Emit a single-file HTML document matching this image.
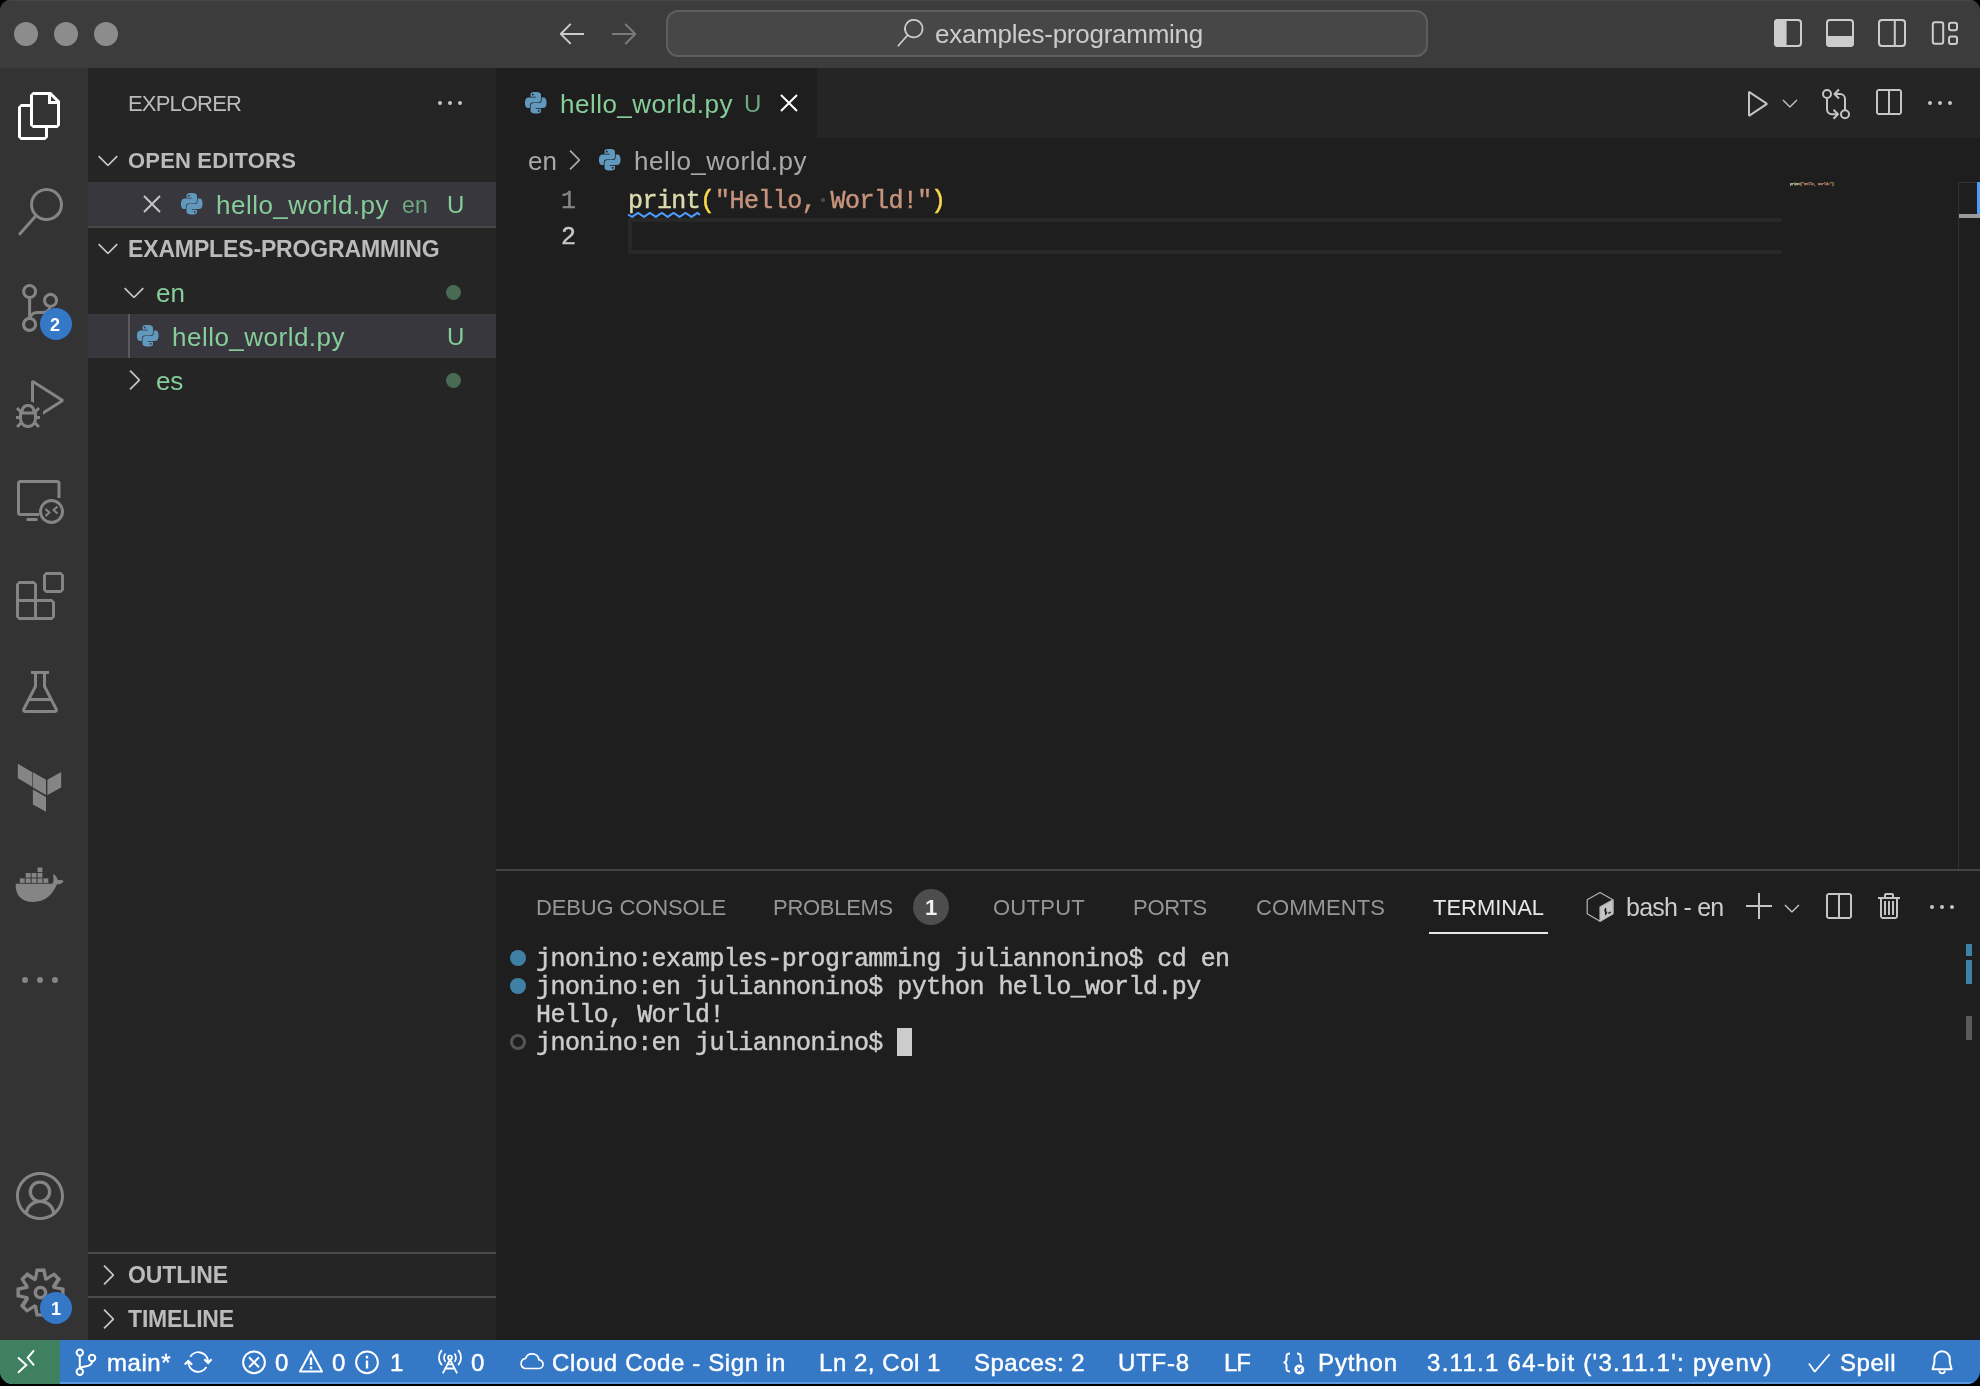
<!DOCTYPE html>
<html><head><meta charset="utf-8"><title>examples-programming</title>
<style>
*{box-sizing:border-box;margin:0;padding:0}
html,body{width:1980px;height:1386px;overflow:hidden;background:#000}
body{font-family:"Liberation Sans",sans-serif}
#win{position:absolute;left:0;top:0;width:1980px;height:1384px;overflow:hidden;border-radius:10px 10px 13px 13px;background:#1e1e1e}
.a{position:absolute}
.t{position:absolute;white-space:pre;line-height:1;will-change:transform}
svg{position:absolute;overflow:visible}
.m{-webkit-text-stroke:0.45px currentColor}

</style></head>
<body>
<div id="win">
<!-- title bar -->
<div class="a" style="left:0;top:0;width:1980px;height:68px;background:#3c3c3c;border-top:1px solid #464646"></div>
<div class="a" style="left:666px;top:9.5px;width:762px;height:47px;background:#474747;border:2px solid #5e5e5e;border-radius:12px"></div>
<div class="a" style="left:14px;top:22px;width:24px;height:24px;border-radius:50%;background:#8c8c8c"></div>
<div class="a" style="left:54px;top:22px;width:24px;height:24px;border-radius:50%;background:#8c8c8c"></div>
<div class="a" style="left:94px;top:22px;width:24px;height:24px;border-radius:50%;background:#8c8c8c"></div>
<!-- activity bar -->
<div class="a" style="left:0;top:68px;width:88px;height:1272px;background:#333333"></div>
<!-- sidebar -->
<div class="a" style="left:88px;top:68px;width:408px;height:1272px;background:#252526"></div>
<div class="a" style="left:88px;top:182px;width:408px;height:44px;background:#37373d"></div>
<div class="a" style="left:88px;top:226px;width:408px;height:2px;background:#474747"></div>
<div class="a" style="left:88px;top:314px;width:408px;height:44px;background:#37373d"></div>
<div class="a" style="left:128px;top:314px;width:2px;height:44px;background:#5a5a5a"></div>
<div class="a" style="left:88px;top:1252px;width:408px;height:2px;background:#4a4a4a"></div>
<div class="a" style="left:88px;top:1296px;width:408px;height:2px;background:#4a4a4a"></div>
<div class="a" style="left:446px;top:285px;width:15px;height:15px;border-radius:50%;background:#4a6b53"></div>
<div class="a" style="left:446px;top:373px;width:15px;height:15px;border-radius:50%;background:#4a6b53"></div>
<!-- editor tabs -->
<div class="a" style="left:496px;top:68px;width:1484px;height:70px;background:#252526"></div>
<div class="a" style="left:496px;top:68px;width:321px;height:70px;background:#1e1e1e"></div>
<!-- current line -->
<div class="a" style="left:628px;top:218px;width:1154px;height:36px;border:4px solid #282828;border-right:0"></div>
<!-- minimap / scrollbar -->
<div class="a" style="left:1958px;top:182px;width:1px;height:688px;background:#333333"></div>
<div class="a" style="left:1958px;top:182px;width:22px;height:1px;background:#333333"></div>
<div class="a" style="left:1977px;top:182px;width:3px;height:34px;background:#4d9bfc"></div>
<div class="a" style="left:1959px;top:214px;width:21px;height:4px;background:#9a9a9a"></div>
<div class="a" style="left:821.2px;top:198px;width:3.6px;height:3.6px;border-radius:50%;background:#4c4c4c"></div>
<!-- panel -->
<div class="a" style="left:496px;top:869px;width:1484px;height:2px;background:#444444"></div>
<div class="a" style="left:1429px;top:932px;width:119px;height:2px;background:#e7e7e7"></div>
<div class="a" style="left:913px;top:889px;width:36px;height:36px;border-radius:50%;background:#4d4d4d"></div>
<div class="a" style="left:897px;top:1028px;width:15px;height:28px;background:#cccccc"></div>
<div class="a" style="left:510px;top:950px;width:16px;height:16px;border-radius:50%;background:#3f81a6"></div>
<div class="a" style="left:510px;top:978px;width:16px;height:16px;border-radius:50%;background:#3f81a6"></div>
<div class="a" style="left:510px;top:1034px;width:16px;height:16px;border-radius:50%;border:3px solid #555"></div>
<div class="a" style="left:1966px;top:944px;width:6px;height:12px;background:#3f81a6"></div>
<div class="a" style="left:1966px;top:960px;width:6px;height:24px;background:#3f81a6"></div>
<div class="a" style="left:1966px;top:1016px;width:6px;height:24px;background:#5a5a5a"></div>
<!-- status bar -->
<div class="a" style="left:0;top:1340px;width:1980px;height:44px;background:#3478c6;border-bottom:2px solid #5e98da"></div>
<div class="a" style="left:0;top:1340px;width:60px;height:44px;background:#3f8060"></div>

<svg style="left:16px;top:92px" width="48" height="48" viewBox="0 0 24 24"><path fill="#ffffff" fill-rule="evenodd" d="M17.5 0h-9L7 1.5V6H2.5L1 7.5v15.07L2.5 24h12.07L16 22.57V18h4.7l1.3-1.43V4.5L17.5 0zm0 2.12l2.38 2.38H17.5V2.12zm-3 20.38h-12v-15H7v9.07L8.5 18h6v4.5zm6-6h-12v-15H16V6h4.5v10.5z"/></svg>
<svg style="left:16px;top:188px" width="48" height="48" viewBox="0 0 24 24"><path fill="#858585" fill-rule="evenodd" d="M15.25 0a8.25 8.25 0 0 0-6.18 13.72L1 22.88l1.12 1 8.05-9.12A8.251 8.251 0 1 0 15.25.01V0zm0 15a6.75 6.75 0 1 1 0-13.5 6.75 6.75 0 0 1 0 13.5z"/></svg>
<svg style="left:16px;top:284px" width="48" height="48" viewBox="0 0 24 24"><path fill="#858585" fill-rule="evenodd" d="M21.007 8.222A3.738 3.738 0 0 0 15.045 5.2a3.737 3.737 0 0 0 1.156 6.583 2.988 2.988 0 0 1-2.668 1.67h-2.99a4.456 4.456 0 0 0-2.989 1.165V7.4a3.737 3.737 0 1 0-1.494 0v9.117a3.776 3.776 0 1 0 1.816.099 2.99 2.99 0 0 1 2.668-1.667h2.99a4.484 4.484 0 0 0 4.223-3.039 3.736 3.736 0 0 0 3.25-3.687zM4.565 3.738a2.242 2.242 0 1 1 4.484 0 2.242 2.242 0 0 1-4.484 0zm4.484 16.441a2.242 2.242 0 1 1-4.484 0 2.242 2.242 0 0 1 4.484 0zm8.221-9.715a2.242 2.242 0 1 1 0-4.485 2.242 2.242 0 0 1 0 4.485z"/></svg>
<svg style="left:16px;top:380px" width="48" height="48" viewBox="0 0 24 24"><path fill="#858585" fill-rule="evenodd" d="M10.94 13.5l-1.32 1.32a3.73 3.73 0 0 0-7.24 0L1.06 13.5 0 14.56l1.72 1.72-.22.22V18H0v1.5h1.5v.08c.077.489.214.966.41 1.42L0 22.94 1.06 24l1.65-1.65A4.308 4.308 0 0 0 6 24a4.31 4.31 0 0 0 3.29-1.65L10.94 24 12 22.94 10.09 21c.198-.464.336-.951.41-1.45v-.1H12V18h-1.5v-1.5l-.22-.22L12 14.56l-1.06-1.06zM6 13.5a2.25 2.25 0 0 1 2.25 2.25h-4.5A2.25 2.25 0 0 1 6 13.5zm3 6a3.33 3.33 0 0 1-3 3 3.33 3.33 0 0 1-3-3v-2.25h6v2.25zm14.76-9.9v1.26L13.5 17.37V15.6l8.5-5.37L9 2v9.46a5.07 5.07 0 0 0-1.5-.72V.63L8.64 0l15.12 9.6z"/></svg>
<svg style="left:16px;top:572px" width="48" height="48" viewBox="0 0 24 24"><path fill="#858585" fill-rule="evenodd" d="M13.5 1.5L15 0h7.5L24 1.5V9l-1.5 1.5H15L13.5 9V1.5zm1.5 0V9h7.5V1.5H15zM0 15V6l1.5-1.5H9L10.5 6v7.5H18l1.5 1.5v7.5L18 24H1.5L0 22.5V15zm9-1.5V6H1.5v7.5H9zM9 15H1.5v7.5H9V15zm1.5 7.5H18V15h-7.5v7.5z"/></svg>
<svg style="left:16px;top:668px" width="48" height="48" viewBox="0 0 16 16"><path fill="#858585" fill-rule="evenodd" d="M13.893 13.558L10 6.006v-4h1v-1H9.994V1H6v.006H5v1h1v4.01l-3.894 7.542A1 1 0 0 0 3 15h10a1 1 0 0 0 .893-1.442zM7 6.25V2h2v4.25l1.933 3.75H5.066L7 6.25zM3 14l1.55-3h6.9l1.55 3H3z"/></svg>
<svg style="left:16px;top:1172px" width="48" height="48" viewBox="0 0 16 16"><path fill="#858585" fill-rule="evenodd" d="M16 7.992C16 3.58 12.416 0 8 0S0 3.58 0 7.992c0 2.43 1.104 4.62 2.832 6.09.016.016.032.016.032.032.144.112.288.224.448.336.08.048.144.111.224.175A7.98 7.98 0 0 0 8.016 16a7.98 7.98 0 0 0 4.48-1.375c.08-.048.144-.111.224-.16.144-.111.304-.223.448-.335.016-.016.032-.016.032-.032 1.696-1.487 2.8-3.676 2.8-6.106zm-8 7.001c-1.504 0-2.88-.48-4.016-1.279.016-.128.048-.255.08-.383a4.17 4.17 0 0 1 .416-.991c.176-.304.384-.576.64-.816.24-.24.528-.463.816-.639.304-.176.624-.304.976-.4A4.15 4.15 0 0 1 8 10.342a4.185 4.185 0 0 1 2.928 1.166c.368.368.656.8.864 1.295.112.288.192.592.24.911A7.03 7.03 0 0 1 8 14.993zm-2.448-7.4a2.49 2.49 0 0 1-.208-1.024c0-.351.064-.703.208-1.023.144-.32.336-.607.576-.847.24-.24.528-.431.848-.575.32-.144.672-.208 1.024-.208.368 0 .704.064 1.024.208.32.144.608.336.848.575.24.24.432.528.576.847.144.32.208.672.208 1.023 0 .368-.064.704-.208 1.023a2.84 2.84 0 0 1-.576.848 2.84 2.84 0 0 1-.848.575 2.715 2.715 0 0 1-2.064 0 2.84 2.84 0 0 1-.848-.575 2.526 2.526 0 0 1-.56-.848zm7.424 5.306c0-.032-.016-.048-.016-.08a5.22 5.22 0 0 0-.688-1.406 4.883 4.883 0 0 0-1.088-1.135 5.207 5.207 0 0 0-1.04-.608 2.82 2.82 0 0 0 .464-.383 4.2 4.2 0 0 0 .624-.784 3.624 3.624 0 0 0 .528-1.934 3.71 3.71 0 0 0-.288-1.47 3.799 3.799 0 0 0-.816-1.199 3.845 3.845 0 0 0-1.2-.8 3.72 3.72 0 0 0-1.472-.287 3.72 3.72 0 0 0-1.472.288 3.631 3.631 0 0 0-1.2.815 3.84 3.84 0 0 0-.8 1.199 3.71 3.71 0 0 0-.288 1.47c0 .352.048.688.144 1.007.096.336.224.64.4.927.16.288.384.544.624.784.144.144.304.271.48.383a5.12 5.12 0 0 0-1.04.624c-.416.32-.784.703-1.088 1.119a4.999 4.999 0 0 0-.688 1.406c-.016.032-.016.064-.016.08C1.776 11.636.992 9.91.992 7.992.992 4.14 4.144.991 8 .991s7.008 3.149 7.008 7.001a6.96 6.96 0 0 1-2.032 4.907z"/></svg>
<svg style="left:12.5px;top:1264.5px" width="55" height="55" viewBox="0 0 16 16"><path fill="#858585" fill-rule="evenodd" d="M9.1 4.4L8.6 2H7.4l-.5 2.4-.7.3-2-1.3-.9.8 1.3 2-.2.7-2.4.5v1.2l2.4.5.3.8-1.3 2 .8.8 2-1.3.8.3.4 2.3h1.2l.5-2.4.8-.3 2 1.3.8-.8-1.3-2 .3-.8 2.3-.4V7.4l-2.4-.5-.3-.8 1.3-2-.8-.8-2 1.3-.7-.2zM9.4 1l.5 2.4L12 2.1l2 2-1.4 2.1 2.4.4v2.8l-2.4.5L14 12l-2 2-2.1-1.4-.5 2.4H6.6l-.5-2.4L4 13.9l-2-2 1.4-2.1L1 9.4V6.6l2.4-.5L2.1 4l2-2 2.1 1.4.4-2.4h2.8zm.6 7c0 1.1-.9 2-2 2s-2-.9-2-2 .9-2 2-2 2 .9 2 2zM8 9c.6 0 1-.4 1-1s-.4-1-1-1-1 .4-1 1 .4 1 1 1z"/></svg>
<svg style="left:16px;top:956px" width="48" height="48" viewBox="0 0 16 16"><path fill="#858585" fill-rule="evenodd" d="M4 8a1 1 0 1 1-2 0 1 1 0 0 1 2 0zm5 0a1 1 0 1 1-2 0 1 1 0 0 1 2 0zm5 0a1 1 0 1 1-2 0 1 1 0 0 1 2 0z"/></svg>
<svg style="left:434px;top:87px" width="32" height="32" viewBox="0 0 16 16"><path fill="#c5c5c5" fill-rule="evenodd" d="M4 8a1 1 0 1 1-2 0 1 1 0 0 1 2 0zm5 0a1 1 0 1 1-2 0 1 1 0 0 1 2 0zm5 0a1 1 0 1 1-2 0 1 1 0 0 1 2 0z"/></svg>
<svg style="left:92px;top:144px" width="32" height="32" viewBox="0 0 16 16"><path fill="#c5c5c5" fill-rule="evenodd" d="M7.976 10.072l4.357-4.357.62.618L8.284 11h-.618L3 6.333l.619-.618 4.357 4.357z"/></svg>
<svg style="left:92px;top:232px" width="32" height="32" viewBox="0 0 16 16"><path fill="#c5c5c5" fill-rule="evenodd" d="M7.976 10.072l4.357-4.357.62.618L8.284 11h-.618L3 6.333l.619-.618 4.357 4.357z"/></svg>
<svg style="left:118px;top:276px" width="32" height="32" viewBox="0 0 16 16"><path fill="#c5c5c5" fill-rule="evenodd" d="M7.976 10.072l4.357-4.357.62.618L8.284 11h-.618L3 6.333l.619-.618 4.357 4.357z"/></svg>
<svg style="left:118px;top:364px" width="32" height="32" viewBox="0 0 16 16"><path fill="#c5c5c5" fill-rule="evenodd" d="M10.072 8.024L5.715 3.667l.618-.62L11 7.716v.618L6.333 13l-.618-.619 4.357-4.357z"/></svg>
<svg style="left:92px;top:1259px" width="32" height="32" viewBox="0 0 16 16"><path fill="#c5c5c5" fill-rule="evenodd" d="M10.072 8.024L5.715 3.667l.618-.62L11 7.716v.618L6.333 13l-.618-.619 4.357-4.357z"/></svg>
<svg style="left:92px;top:1303px" width="32" height="32" viewBox="0 0 16 16"><path fill="#c5c5c5" fill-rule="evenodd" d="M10.072 8.024L5.715 3.667l.618-.62L11 7.716v.618L6.333 13l-.618-.619 4.357-4.357z"/></svg>
<svg style="left:136px;top:188px" width="32" height="32" viewBox="0 0 16 16"><path fill="#c5c5c5" fill-rule="evenodd" d="M8 8.707l3.646 3.647.708-.707L8.707 8l3.647-3.646-.707-.708L8 7.293 4.354 3.646l-.707.708L7.293 8l-3.646 3.646.707.708L8 8.707z"/></svg>
<svg style="left:773px;top:87px" width="32" height="32" viewBox="0 0 16 16"><path fill="#ffffff" fill-rule="evenodd" d="M8 8.707l3.646 3.647.708-.707L8.707 8l3.647-3.646-.707-.708L8 7.293 4.354 3.646l-.707.708L7.293 8l-3.646 3.646.707.708L8 8.707z"/></svg>
<svg style="left:558px;top:144px" width="32" height="32" viewBox="0 0 16 16"><path fill="#a9a9a9" fill-rule="evenodd" d="M10.072 8.024L5.715 3.667l.618-.62L11 7.716v.618L6.333 13l-.618-.619 4.357-4.357z"/></svg>
<svg style="left:556px;top:17px" width="32" height="32" viewBox="0 0 16 16"><path fill="#cccccc" fill-rule="evenodd" d="M7 3.093l-5 5V8.8l5 5 .707-.707-4.146-4.147H14v-1H3.56L7.708 3.8 7 3.093z"/></svg>
<svg style="left:608px;top:17px" width="32" height="32" viewBox="0 0 16 16"><path fill="#7a7a7a" fill-rule="evenodd" d="M9 13.887l5-5V8.18l-5-5-.707.707 4.146 4.147H2v1h10.44L8.292 13.18l.707.707z"/></svg>
<svg style="left:1742px;top:87px" width="32" height="32" viewBox="0 0 16 16"><path fill="#c5c5c5" fill-rule="evenodd" d="M3.78 2L3 2.41v12l.78.42 9-6V8l-9-6zM4 13.48V3.35l7.6 5.07L4 13.48z"/></svg>
<svg style="left:1778px;top:91px" width="24" height="24" viewBox="0 0 16 16"><path fill="#c5c5c5" fill-rule="evenodd" d="M7.976 10.072l4.357-4.357.62.618L8.284 11h-.618L3 6.333l.619-.618 4.357 4.357z"/></svg>
<svg style="left:1872px;top:87px" width="32" height="32" viewBox="0 0 16 16"><path fill="#c5c5c5" fill-rule="evenodd" d="M14 1H3L2 2v11l1 1h11l1-1V2l-1-1zM8 13H3V2h5v11zm6 0H9V2h5v11z"/></svg>
<svg style="left:1924px;top:87px" width="32" height="32" viewBox="0 0 16 16"><path fill="#c5c5c5" fill-rule="evenodd" d="M4 8a1 1 0 1 1-2 0 1 1 0 0 1 2 0zm5 0a1 1 0 1 1-2 0 1 1 0 0 1 2 0zm5 0a1 1 0 1 1-2 0 1 1 0 0 1 2 0z"/></svg>
<svg style="left:1744px;top:891px" width="32" height="32" viewBox="0 0 16 16"><path fill="#c5c5c5" fill-rule="evenodd" d="M14 7v1H8v6H7V8H1V7h6V1h1v6h6z"/></svg>
<svg style="left:1780px;top:895.5px" width="24" height="24" viewBox="0 0 16 16"><path fill="#c5c5c5" fill-rule="evenodd" d="M7.976 10.072l4.357-4.357.62.618L8.284 11h-.618L3 6.333l.619-.618 4.357 4.357z"/></svg>
<svg style="left:1821.7px;top:891.2px" width="32" height="32" viewBox="0 0 16 16"><path fill="#c5c5c5" fill-rule="evenodd" d="M14 1H3L2 2v11l1 1h11l1-1V2l-1-1zM8 13H3V2h5v11zm6 0H9V2h5v11z"/></svg>
<svg style="left:1874px;top:891.2px" width="32" height="32" viewBox="0 0 16 16"><path fill="#c5c5c5" fill-rule="evenodd" d="M10 3h3v1h-1v9l-1 1H4l-1-1V4H2V3h3V2a1 1 0 0 1 1-1h3a1 1 0 0 1 1 1v1zM9 2H6v1h3V2zM4 13h7V4H4v9zm2-8H5v7h1V5zm1 0h1v7H7V5zm2 0h1v7H9V5z"/></svg>
<svg style="left:1926px;top:891.3px" width="32" height="32" viewBox="0 0 16 16"><path fill="#c5c5c5" fill-rule="evenodd" d="M4 8a1 1 0 1 1-2 0 1 1 0 0 1 2 0zm5 0a1 1 0 1 1-2 0 1 1 0 0 1 2 0zm5 0a1 1 0 1 1-2 0 1 1 0 0 1 2 0z"/></svg>
<svg style="left:1805.2px;top:1348.8px" width="28" height="28" viewBox="0 0 16 16"><path fill="#ffffff" fill-rule="evenodd" d="M14.431 3.323l-8.47 10-.79-.036-3.35-4.77.818-.574 2.978 4.24 8.051-9.506.764.646z"/></svg>
<svg style="left:524.8px;top:91.8px" width="21.5" height="21.5" viewBox="0 0 24 24"><path fill="#6099bd" fill-rule="evenodd" d="M14.25.18l.9.2.73.26.59.3.45.32.34.34.25.34.16.33.1.3.04.26.02.2-.01.13V8.5l-.05.63-.13.55-.21.46-.26.38-.3.31-.33.25-.35.19-.35.14-.33.1-.3.07-.26.04-.21.02H8.77l-.69.05-.59.14-.5.22-.41.27-.33.32-.27.35-.2.36-.15.37-.1.35-.07.32-.04.27-.02.21v3.06H3.17l-.21-.03-.28-.07-.32-.12-.35-.18-.36-.26-.36-.36-.35-.46-.32-.59-.28-.73-.21-.88-.14-1.05-.05-1.23.06-1.22.16-1.04.24-.87.32-.71.36-.57.4-.44.42-.33.42-.24.4-.16.36-.1.32-.05.24-.01h.16l.06.01h8.16v-.83H6.18l-.01-2.75-.02-.37.05-.34.11-.31.17-.28.25-.26.31-.23.38-.2.44-.18.51-.15.58-.12.64-.1.71-.06.77-.04.84-.02 1.27.05zm-6.3 1.98l-.23.33-.08.41.08.41.23.34.33.22.41.09.41-.09.33-.22.23-.34.08-.41-.08-.41-.23-.33-.33-.22-.41-.09-.41.09zm13.09 3.95l.28.06.32.12.35.18.36.27.36.35.35.47.32.59.28.73.21.88.14 1.04.05 1.23-.06 1.23-.16 1.04-.24.86-.32.71-.36.57-.4.45-.42.33-.42.24-.4.16-.36.09-.32.05-.24.02-.16-.01h-8.22v.82h5.84l.01 2.76.02.36-.05.34-.11.31-.17.29-.25.25-.31.24-.38.2-.44.17-.51.15-.58.13-.64.09-.71.07-.77.04-.84.01-1.27-.04-1.07-.14-.9-.2-.73-.25-.59-.3-.45-.33-.34-.34-.25-.34-.16-.33-.1-.3-.04-.25-.02-.2.01-.13v-5.34l.05-.64.13-.54.21-.46.26-.38.3-.32.33-.24.35-.2.35-.14.33-.1.3-.06.26-.04.21-.02.13-.01h5.84l.69-.05.59-.14.5-.21.41-.28.33-.32.27-.35.2-.36.15-.36.1-.35.07-.32.04-.28.02-.21V6.07h2.09l.14.01zm-6.47 14.25l-.23.33-.08.41.08.41.23.33.33.23.41.08.41-.08.33-.23.23-.33.08-.41-.08-.41-.23-.33-.33-.23-.41-.08-.41.08z"/></svg>
<svg style="left:180.8px;top:193.1px" width="21.5" height="21.5" viewBox="0 0 24 24"><path fill="#6099bd" fill-rule="evenodd" d="M14.25.18l.9.2.73.26.59.3.45.32.34.34.25.34.16.33.1.3.04.26.02.2-.01.13V8.5l-.05.63-.13.55-.21.46-.26.38-.3.31-.33.25-.35.19-.35.14-.33.1-.3.07-.26.04-.21.02H8.77l-.69.05-.59.14-.5.22-.41.27-.33.32-.27.35-.2.36-.15.37-.1.35-.07.32-.04.27-.02.21v3.06H3.17l-.21-.03-.28-.07-.32-.12-.35-.18-.36-.26-.36-.36-.35-.46-.32-.59-.28-.73-.21-.88-.14-1.05-.05-1.23.06-1.22.16-1.04.24-.87.32-.71.36-.57.4-.44.42-.33.42-.24.4-.16.36-.1.32-.05.24-.01h.16l.06.01h8.16v-.83H6.18l-.01-2.75-.02-.37.05-.34.11-.31.17-.28.25-.26.31-.23.38-.2.44-.18.51-.15.58-.12.64-.1.71-.06.77-.04.84-.02 1.27.05zm-6.3 1.98l-.23.33-.08.41.08.41.23.34.33.22.41.09.41-.09.33-.22.23-.34.08-.41-.08-.41-.23-.33-.33-.22-.41-.09-.41.09zm13.09 3.95l.28.06.32.12.35.18.36.27.36.35.35.47.32.59.28.73.21.88.14 1.04.05 1.23-.06 1.23-.16 1.04-.24.86-.32.71-.36.57-.4.45-.42.33-.42.24-.4.16-.36.09-.32.05-.24.02-.16-.01h-8.22v.82h5.84l.01 2.76.02.36-.05.34-.11.31-.17.29-.25.25-.31.24-.38.2-.44.17-.51.15-.58.13-.64.09-.71.07-.77.04-.84.01-1.27-.04-1.07-.14-.9-.2-.73-.25-.59-.3-.45-.33-.34-.34-.25-.34-.16-.33-.1-.3-.04-.25-.02-.2.01-.13v-5.34l.05-.64.13-.54.21-.46.26-.38.3-.32.33-.24.35-.2.35-.14.33-.1.3-.06.26-.04.21-.02.13-.01h5.84l.69-.05.59-.14.5-.21.41-.28.33-.32.27-.35.2-.36.15-.36.1-.35.07-.32.04-.28.02-.21V6.07h2.09l.14.01zm-6.47 14.25l-.23.33-.08.41.08.41.23.33.33.23.41.08.41-.08.33-.23.23-.33.08-.41-.08-.41-.23-.33-.33-.23-.41-.08-.41.08z"/></svg>
<svg style="left:136.9px;top:325.1px" width="21.5" height="21.5" viewBox="0 0 24 24"><path fill="#6099bd" fill-rule="evenodd" d="M14.25.18l.9.2.73.26.59.3.45.32.34.34.25.34.16.33.1.3.04.26.02.2-.01.13V8.5l-.05.63-.13.55-.21.46-.26.38-.3.31-.33.25-.35.19-.35.14-.33.1-.3.07-.26.04-.21.02H8.77l-.69.05-.59.14-.5.22-.41.27-.33.32-.27.35-.2.36-.15.37-.1.35-.07.32-.04.27-.02.21v3.06H3.17l-.21-.03-.28-.07-.32-.12-.35-.18-.36-.26-.36-.36-.35-.46-.32-.59-.28-.73-.21-.88-.14-1.05-.05-1.23.06-1.22.16-1.04.24-.87.32-.71.36-.57.4-.44.42-.33.42-.24.4-.16.36-.1.32-.05.24-.01h.16l.06.01h8.16v-.83H6.18l-.01-2.75-.02-.37.05-.34.11-.31.17-.28.25-.26.31-.23.38-.2.44-.18.51-.15.58-.12.64-.1.71-.06.77-.04.84-.02 1.27.05zm-6.3 1.98l-.23.33-.08.41.08.41.23.34.33.22.41.09.41-.09.33-.22.23-.34.08-.41-.08-.41-.23-.33-.33-.22-.41-.09-.41.09zm13.09 3.95l.28.06.32.12.35.18.36.27.36.35.35.47.32.59.28.73.21.88.14 1.04.05 1.23-.06 1.23-.16 1.04-.24.86-.32.71-.36.57-.4.45-.42.33-.42.24-.4.16-.36.09-.32.05-.24.02-.16-.01h-8.22v.82h5.84l.01 2.76.02.36-.05.34-.11.31-.17.29-.25.25-.31.24-.38.2-.44.17-.51.15-.58.13-.64.09-.71.07-.77.04-.84.01-1.27-.04-1.07-.14-.9-.2-.73-.25-.59-.3-.45-.33-.34-.34-.25-.34-.16-.33-.1-.3-.04-.25-.02-.2.01-.13v-5.34l.05-.64.13-.54.21-.46.26-.38.3-.32.33-.24.35-.2.35-.14.33-.1.3-.06.26-.04.21-.02.13-.01h5.84l.69-.05.59-.14.5-.21.41-.28.33-.32.27-.35.2-.36.15-.36.1-.35.07-.32.04-.28.02-.21V6.07h2.09l.14.01zm-6.47 14.25l-.23.33-.08.41.08.41.23.33.33.23.41.08.41-.08.33-.23.23-.33.08-.41-.08-.41-.23-.33-.33-.23-.41-.08-.41.08z"/></svg>
<svg style="left:598.8px;top:149.1px" width="21.5" height="21.5" viewBox="0 0 24 24"><path fill="#6099bd" fill-rule="evenodd" d="M14.25.18l.9.2.73.26.59.3.45.32.34.34.25.34.16.33.1.3.04.26.02.2-.01.13V8.5l-.05.63-.13.55-.21.46-.26.38-.3.31-.33.25-.35.19-.35.14-.33.1-.3.07-.26.04-.21.02H8.77l-.69.05-.59.14-.5.22-.41.27-.33.32-.27.35-.2.36-.15.37-.1.35-.07.32-.04.27-.02.21v3.06H3.17l-.21-.03-.28-.07-.32-.12-.35-.18-.36-.26-.36-.36-.35-.46-.32-.59-.28-.73-.21-.88-.14-1.05-.05-1.23.06-1.22.16-1.04.24-.87.32-.71.36-.57.4-.44.42-.33.42-.24.4-.16.36-.1.32-.05.24-.01h.16l.06.01h8.16v-.83H6.18l-.01-2.75-.02-.37.05-.34.11-.31.17-.28.25-.26.31-.23.38-.2.44-.18.51-.15.58-.12.64-.1.71-.06.77-.04.84-.02 1.27.05zm-6.3 1.98l-.23.33-.08.41.08.41.23.34.33.22.41.09.41-.09.33-.22.23-.34.08-.41-.08-.41-.23-.33-.33-.22-.41-.09-.41.09zm13.09 3.95l.28.06.32.12.35.18.36.27.36.35.35.47.32.59.28.73.21.88.14 1.04.05 1.23-.06 1.23-.16 1.04-.24.86-.32.71-.36.57-.4.45-.42.33-.42.24-.4.16-.36.09-.32.05-.24.02-.16-.01h-8.22v.82h5.84l.01 2.76.02.36-.05.34-.11.31-.17.29-.25.25-.31.24-.38.2-.44.17-.51.15-.58.13-.64.09-.71.07-.77.04-.84.01-1.27-.04-1.07-.14-.9-.2-.73-.25-.59-.3-.45-.33-.34-.34-.25-.34-.16-.33-.1-.3-.04-.25-.02-.2.01-.13v-5.34l.05-.64.13-.54.21-.46.26-.38.3-.32.33-.24.35-.2.35-.14.33-.1.3-.06.26-.04.21-.02.13-.01h5.84l.69-.05.59-.14.5-.21.41-.28.33-.32.27-.35.2-.36.15-.36.1-.35.07-.32.04-.28.02-.21V6.07h2.09l.14.01zm-6.47 14.25l-.23.33-.08.41.08.41.23.33.33.23.41.08.41-.08.33-.23.23-.33.08-.41-.08-.41-.23-.33-.33-.23-.41-.08-.41.08z"/></svg>
<svg style="left:0px;top:470px" width="88" height="60" viewBox="0 0 88 60"><g fill="none" stroke="#858585" stroke-width="3" stroke-linejoin="round">
<path d="M39 44.5H20.5a2 2 0 0 1-2-2v-29a2 2 0 0 1 2-2h36.5a2 2 0 0 1 2 2V28"/>
<path d="M26.5 49.5h11"/>
<circle cx="51.5" cy="41.5" r="11"/>
<path d="M45.5 39l4 3.5-4 3.5M57.5 36.5l-4 3.5 4 3.5" stroke-width="2.2"/></g></svg>
<svg style="left:0px;top:750px" width="88" height="70" viewBox="0 0 88 70"><g fill="#858585"><path d="M17.8 13.8l14.5 8.5v14.5l-14.5-8.5z"/><path d="M32.9 22.3l13.1 7.5v15.1l-13.1-7.5z"/><path d="M47.4 29.8l13.8-7.9v15.5l-13.8 7.5z"/><path d="M32.9 39.4l13.1 7.7v14.7l-13.1-7.2z"/></g></svg>
<svg style="left:0px;top:860px" width="88" height="50" viewBox="0 0 88 50"><g fill="#858585">
<path d="M15.7 23.7h36.6c1-1.2 1.3-3 1.2-4.6 -.1-1.800 -.5-3.300 -.2-5.2 2.600 1.500 4.200 4.100 4.500 6.400 2.300-.6 4.300-.3 6 .6 -1.300 2.300-3.600 3.300-6.800 3.400 -3.800 9-10.500 17.700-24.300 17.700 -10.800 0-17.600-6.500-17-18.300z"/>
<rect x="19.8" y="18.400" width="4.900" height="4.500"/><rect x="25.700" y="18.400" width="4.900" height="4.500"/><rect x="31.600" y="18.400" width="4.900" height="4.500"/><rect x="37.500" y="18.400" width="4.900" height="4.500"/><rect x="43.400" y="18.400" width="4.900" height="4.500"/>
<rect x="25.700" y="13" width="4.900" height="4.500"/><rect x="31.600" y="13" width="4.900" height="4.500"/><rect x="37.500" y="13" width="4.900" height="4.500"/>
<rect x="37.500" y="7.600" width="4.900" height="4.500"/></g></svg>
<svg style="left:1770px;top:14px" width="200" height="40" viewBox="0 0 200 40"><g fill="none" stroke="#cccccc" stroke-width="2">
<rect x="5" y="6" width="26" height="26" rx="3"/><path d="M5 9a3 3 0 0 1 3-3h7.600v26H8a3 3 0 0 1-3-3z" fill="#cccccc"/>
<rect x="57" y="6" width="26" height="26" rx="3"/><path d="M57 23h26v6a3 3 0 0 1-3 3H60a3 3 0 0 1-3-3z" fill="#cccccc"/>
<rect x="109" y="6" width="26" height="26" rx="3"/><path d="M124.800 6v26"/>
<rect x="162.800" y="8.200" width="10.400" height="21.600" rx="2"/><rect x="179" y="8.700" width="8" height="7.500" rx="2"/><rect x="179" y="22.500" width="8" height="7.500" rx="2"/>
</g></svg>
<svg style="left:1816px;top:84px" width="40" height="40" viewBox="0 0 40 40"><g fill="none" stroke="#c5c5c5" stroke-width="2" stroke-linejoin="round">
<circle cx="11" cy="10" r="4"/><circle cx="29" cy="30.300" r="4"/>
<path d="M11 14v11.300a5 5 0 0 0 5 5h5.500"/><path d="M17.500 25.800l4.500 4.500-4.500 4.500"/>
<path d="M29 26.300V15a5 5 0 0 0-5-5h-5"/><path d="M23 5.500l-4.500 4.500 4.500 4.500"/></g></svg>
<svg style="left:1580px;top:886px" width="40" height="42" viewBox="0 0 40 42"><g stroke="#b4b4b4" stroke-width="1.200" stroke-linejoin="round" fill="none">
<path d="M20 6.600l12.900 7.200v14l-12.900 7.500-12.800-7.500v-14z"/>
<path d="M20 21l12.900-7.200v14l-12.900 7.500z" fill="#c5c5c5"/></g>
<g fill="none" stroke="#1e1e1e" stroke-width="1.300"><path d="M26.200 23.200c-1.600 0-2 1.800-.4 2.500 1.500.7.900 2.400-.8 2.300M25.600 22v7.200M28.300 27.300l2.600-1.300"/></g></svg>
<svg style="left:0px;top:1340px" width="620" height="46" viewBox="0 0 620 46"><g fill="none" stroke="#ffffff" stroke-width="2" stroke-linecap="butt" stroke-linejoin="miter">
<path d="M18 17.500l8.300 7.600-8.300 7.600M34 10.300l-6.300 7.500 6.300 7.500" stroke-width="2"/>
<circle cx="79.800" cy="12.600" r="3.200"/><circle cx="79.800" cy="31.700" r="3.200"/><circle cx="92.100" cy="18" r="3.200"/>
<path d="M79.800 15.800v12.700M92.100 21.200c0 4.500-5 5-12.300 6.300"/>
<path d="M190.300 16.700a9.600 9.600 0 0 1 17.700 5.500M206.300 27a9.600 9.600 0 0 1-17.900-5"/>
<path d="M204.300 19.200l3.800 3.800 3.500-3.800M184.800 24.500l3.500-3.600 3.800 3.800"/>
<circle cx="254" cy="22.300" r="10.900"/><path d="M249 17.300l10 10M259 17.300l-10 10"/>
<path d="M311 11l11 20.500h-22z" stroke-linejoin="round"/><path d="M311 17.500v7.500M311 26.600v2.600" stroke-width="2.400"/>
<circle cx="367" cy="22.300" r="10.900"/><path d="M367 20.500v8M367 15.800v2.600" stroke-width="2.400"/>
<path d="M450 19.500L442.800 33.400M450 19.500L457.100 33.400M447.300 24.400h5.400M445.300 28.500h9.400" stroke-width="1.800"/><circle cx="450" cy="17.500" r="2" stroke-width="1.700"/>
<path d="M445.600 13.600A6 6 0 0 0 445.600 21.800M454.400 13.600A6 6 0 0 1 454.400 21.800M441.960 10.200A11 11 0 0 0 441.960 25.200M458.040 10.200A11 11 0 0 1 458.040 25.200" stroke-width="1.700"/>
<path d="M525 28.500h13.500a4.300 4.300 0 0 0 .5-8.600 7 7 0 0 0-13.500-1.400 5.100 5.100 0 0 0-.5 10z" stroke-linejoin="round" stroke-width="1.700"/>
</g></svg>
<svg style="left:1270px;top:1340px" width="60" height="46" viewBox="0 0 60 46"><g fill="none" stroke="#ffffff" stroke-width="2">
<path d="M20 13.500c-3 0-3.500 1-3.500 3v3c0 2-1 2.800-2.800 3 1.800.2 2.800 1 2.800 3v3c0 2 .5 3 3.500 3"/>
<path d="M27 13.500c3 0 3.500 1 3.500 3v3c0 1.500.5 2.300 1.500 2.700"/>
<circle cx="29.300" cy="29.500" r="5" fill="#ffffff" stroke="none"/></g>
<path d="M27.300 27.500l4 4M31.300 27.500l-4 4" stroke="#3478c6" stroke-width="1.500"/></svg>
<svg style="left:1925px;top:1340px" width="40" height="46" viewBox="0 0 40 46"><g fill="none" stroke="#ffffff" stroke-width="2" stroke-linejoin="round">
<path d="M7.600 29.200L9.400 22.500V19A7.700 7.700 0 0 1 24.800 19V22.500L26.600 29.200Z"/><path d="M14.300 30.500a2.800 2.800 0 0 0 5.600 0" stroke-width="1.800"/></g></svg>
<svg style="left:0;top:0" width="1980" height="300" viewBox="0 0 1980 300"><path d="M628 214.500L632.1 216.9L638.0 212.9L644.0 216.9L649.9 212.9L655.8 216.9L661.8 212.9L667.7 216.9L673.6 212.9L679.6 216.9L685.5 212.9L691.5 216.9L697.4 212.9L700 215" fill="none" stroke="#4d9bfc" stroke-width="2" stroke-linejoin="round"/></svg>
<svg style="left:896.2px;top:18.5px" width="28" height="28" viewBox="0 0 24 24"><path fill="#cccccc" fill-rule="evenodd" d="M15.25 0a8.25 8.25 0 0 0-6.18 13.72L1 22.88l1.12 1 8.05-9.12A8.251 8.251 0 1 0 15.25.01V0zm0 15a6.75 6.75 0 1 1 0-13.5 6.75 6.75 0 0 1 0 13.5z"/></svg>
<div class="a" style="left:40px;top:308px;width:32px;height:32px;border-radius:50%;background:#3478c6"></div>
<div class="a" style="left:40px;top:1292px;width:32px;height:32px;border-radius:50%;background:#3478c6"></div>
<span class="t" id="t0" style="left:935px;top:20.69px;font-size:26px;color:#cccccc;letter-spacing:-0.255px;">examples-programming</span>
<span class="t" id="t1" style="left:128px;top:92.88px;font-size:22px;color:#bbbbbb;letter-spacing:-0.854px;">EXPLORER</span>
<span class="t" id="t2" style="left:128px;top:149.98px;font-size:22px;color:#bbbbbb;font-weight:700;letter-spacing:0.178px;">OPEN EDITORS</span>
<span class="t" id="t3" style="left:216px;top:191.69px;font-size:26px;color:#86cd9a;letter-spacing:0.484px;">hello_world.py</span>
<span class="t" id="t4" style="left:402px;top:194.23px;font-size:23px;color:#6ea880;letter-spacing:0.203px;">en</span>
<span class="t" id="t5" style="left:447px;top:193.38px;font-size:24px;color:#86cd9a;letter-spacing:-2.344px;">U</span>
<span class="t" id="t6" style="left:128px;top:237.73px;font-size:23px;color:#bbbbbb;font-weight:700;letter-spacing:-0.142px;">EXAMPLES-PROGRAMMING</span>
<span class="t" id="t7" style="left:156px;top:279.69px;font-size:26px;color:#86cd9a;letter-spacing:0.039px;">en</span>
<span class="t" id="t8" style="left:172px;top:323.69px;font-size:26px;color:#86cd9a;letter-spacing:0.484px;">hello_world.py</span>
<span class="t" id="t9" style="left:447px;top:325.38px;font-size:24px;color:#86cd9a;letter-spacing:-2.344px;">U</span>
<span class="t" id="t10" style="left:156px;top:367.69px;font-size:26px;color:#86cd9a;letter-spacing:-0.234px;">es</span>
<span class="t" id="t11" style="left:128px;top:1263.73px;font-size:23px;color:#bbbbbb;font-weight:700;letter-spacing:-0.136px;">OUTLINE</span>
<span class="t" id="t12" style="left:128px;top:1307.73px;font-size:23px;color:#bbbbbb;font-weight:700;letter-spacing:-0.168px;">TIMELINE</span>
<span class="t" id="t13" style="left:560px;top:90.69px;font-size:26px;color:#86cd9a;letter-spacing:0.484px;">hello_world.py</span>
<span class="t" id="t14" style="left:744px;top:92.38px;font-size:24px;color:#6ea880;letter-spacing:-1.344px;">U</span>
<span class="t" id="t15" style="left:528px;top:147.59px;font-size:26px;color:#a9a9a9;letter-spacing:0.039px;">en</span>
<span class="t" id="t16" style="left:634px;top:147.59px;font-size:26px;color:#a9a9a9;letter-spacing:0.484px;">hello_world.py</span>
<span class="t m" id="t17" style="left:561px;top:188.83px;font-size:25px;color:#858585;font-family:'Liberation Mono', monospace;letter-spacing:-0.566px;">1</span>
<span class="t m" id="t18" style="left:561px;top:224.83px;font-size:25px;color:#c6c6c6;font-family:'Liberation Mono', monospace;letter-spacing:-0.566px;">2</span>
<span class="t m" id="t19" style="left:628px;top:188.83px;font-size:25px;color:#dadcae;font-family:'Liberation Mono', monospace;letter-spacing:-0.553px;">print</span>
<span class="t m" id="t20" style="left:700.25px;top:188.83px;font-size:25px;color:#fbd94b;font-family:'Liberation Mono', monospace;letter-spacing:-0.566px;">(</span>
<span class="t m" id="t21" style="left:714.7px;top:188.83px;font-size:25px;color:#c6947c;font-family:'Liberation Mono', monospace;letter-spacing:-0.553px;">"Hello, World!"</span>
<span class="t m" id="t22" style="left:931.45px;top:188.83px;font-size:25px;color:#fbd94b;font-family:'Liberation Mono', monospace;letter-spacing:-0.566px;">)</span>
<span class="t" id="t23" style="left:536px;top:897.08px;font-size:22px;color:#969696;letter-spacing:-0.149px;">DEBUG CONSOLE</span>
<span class="t" id="t24" style="left:773px;top:897.08px;font-size:22px;color:#969696;letter-spacing:-0.283px;">PROBLEMS</span>
<span class="t" id="t25" style="left:925px;top:897.08px;font-size:22px;color:#f0f0f0;font-weight:700;">1</span>
<span class="t" id="t26" style="left:993px;top:897.08px;font-size:22px;color:#969696;letter-spacing:0.258px;">OUTPUT</span>
<span class="t" id="t27" style="left:1133px;top:897.08px;font-size:22px;color:#969696;letter-spacing:-0.278px;">PORTS</span>
<span class="t" id="t28" style="left:1256px;top:897.08px;font-size:22px;color:#969696;letter-spacing:0.084px;">COMMENTS</span>
<span class="t" id="t29" style="left:1433px;top:897.08px;font-size:22px;color:#e7e7e7;letter-spacing:-0.031px;">TERMINAL</span>
<span class="t" id="t30" style="left:1625.5px;top:894.84px;font-size:25px;color:#cccccc;letter-spacing:-0.750px;">bash - en</span>
<span class="t m" id="t31" style="left:536px;top:946.83px;font-size:25px;color:#cccccc;font-family:'Liberation Mono', monospace;letter-spacing:-0.553px;">jnonino:examples-programming juliannonino$ cd en</span>
<span class="t m" id="t32" style="left:536px;top:974.83px;font-size:25px;color:#cccccc;font-family:'Liberation Mono', monospace;letter-spacing:-0.553px;">jnonino:en juliannonino$ python hello_world.py</span>
<span class="t m" id="t33" style="left:536px;top:1002.83px;font-size:25px;color:#cccccc;font-family:'Liberation Mono', monospace;letter-spacing:-0.554px;">Hello, World!</span>
<span class="t m" id="t34" style="left:536px;top:1030.83px;font-size:25px;color:#cccccc;font-family:'Liberation Mono', monospace;letter-spacing:-0.553px;">jnonino:en juliannonino$</span>
<span class="t" id="t35" style="left:107px;top:1350.68px;font-size:24px;color:#ffffff;letter-spacing:0.528px;-webkit-text-stroke:0.45px #fff;">main*</span>
<span class="t" id="t36" style="left:275px;top:1350.68px;font-size:24px;color:#ffffff;-webkit-text-stroke:0.45px #fff;">0</span>
<span class="t" id="t37" style="left:332px;top:1350.68px;font-size:24px;color:#ffffff;-webkit-text-stroke:0.45px #fff;">0</span>
<span class="t" id="t38" style="left:389.7px;top:1350.68px;font-size:24px;color:#ffffff;-webkit-text-stroke:0.45px #fff;">1</span>
<span class="t" id="t39" style="left:471px;top:1350.68px;font-size:24px;color:#ffffff;-webkit-text-stroke:0.45px #fff;">0</span>
<span class="t" id="t40" style="left:552px;top:1350.68px;font-size:24px;color:#ffffff;letter-spacing:0.627px;-webkit-text-stroke:0.45px #fff;">Cloud Code - Sign in</span>
<span class="t" id="t41" style="left:819px;top:1350.68px;font-size:24px;color:#ffffff;letter-spacing:0.538px;-webkit-text-stroke:0.45px #fff;">Ln 2, Col 1</span>
<span class="t" id="t42" style="left:974px;top:1350.68px;font-size:24px;color:#ffffff;letter-spacing:0.474px;-webkit-text-stroke:0.45px #fff;">Spaces: 2</span>
<span class="t" id="t43" style="left:1118px;top:1350.68px;font-size:24px;color:#ffffff;letter-spacing:0.800px;-webkit-text-stroke:0.45px #fff;">UTF-8</span>
<span class="t" id="t44" style="left:1224px;top:1350.68px;font-size:24px;color:#ffffff;letter-spacing:-1.008px;-webkit-text-stroke:0.45px #fff;">LF</span>
<span class="t" id="t45" style="left:1318px;top:1350.68px;font-size:24px;color:#ffffff;letter-spacing:0.880px;-webkit-text-stroke:0.45px #fff;">Python</span>
<span class="t" id="t46" style="left:1427px;top:1350.68px;font-size:24px;color:#ffffff;letter-spacing:1.287px;-webkit-text-stroke:0.45px #fff;">3.11.1 64-bit ('3.11.1': pyenv)</span>
<span class="t" id="t47" style="left:1840px;top:1350.68px;font-size:24px;color:#ffffff;letter-spacing:0.525px;-webkit-text-stroke:0.45px #fff;">Spell</span>
<span class="t" id="t48" style="left:50px;top:315.76px;font-size:18px;color:#fff;font-weight:700;">2</span>
<span class="t" id="t49" style="left:51px;top:1299.76px;font-size:18px;color:#fff;font-weight:700;">1</span>
<span class="t m" id="t50" style="left:1789.8px;top:183.03px;font-size:3.35px;color:#c0c29a;font-family:'Liberation Mono', monospace;-webkit-text-stroke:0.25px currentColor;font-weight:700;">print</span>
<span class="t m" id="t51" style="left:1799.85px;top:183.03px;font-size:3.35px;color:#d8bb45;font-family:'Liberation Mono', monospace;-webkit-text-stroke:0.25px currentColor;font-weight:700;">(</span>
<span class="t m" id="t52" style="left:1801.86px;top:183.03px;font-size:3.35px;color:#b5866f;font-family:'Liberation Mono', monospace;-webkit-text-stroke:0.25px currentColor;font-weight:700;">"Hello, World!"</span>
<span class="t m" id="t53" style="left:1832.01px;top:183.03px;font-size:3.35px;color:#d8bb45;font-family:'Liberation Mono', monospace;-webkit-text-stroke:0.25px currentColor;font-weight:700;">)</span>
</div>
</body></html>
